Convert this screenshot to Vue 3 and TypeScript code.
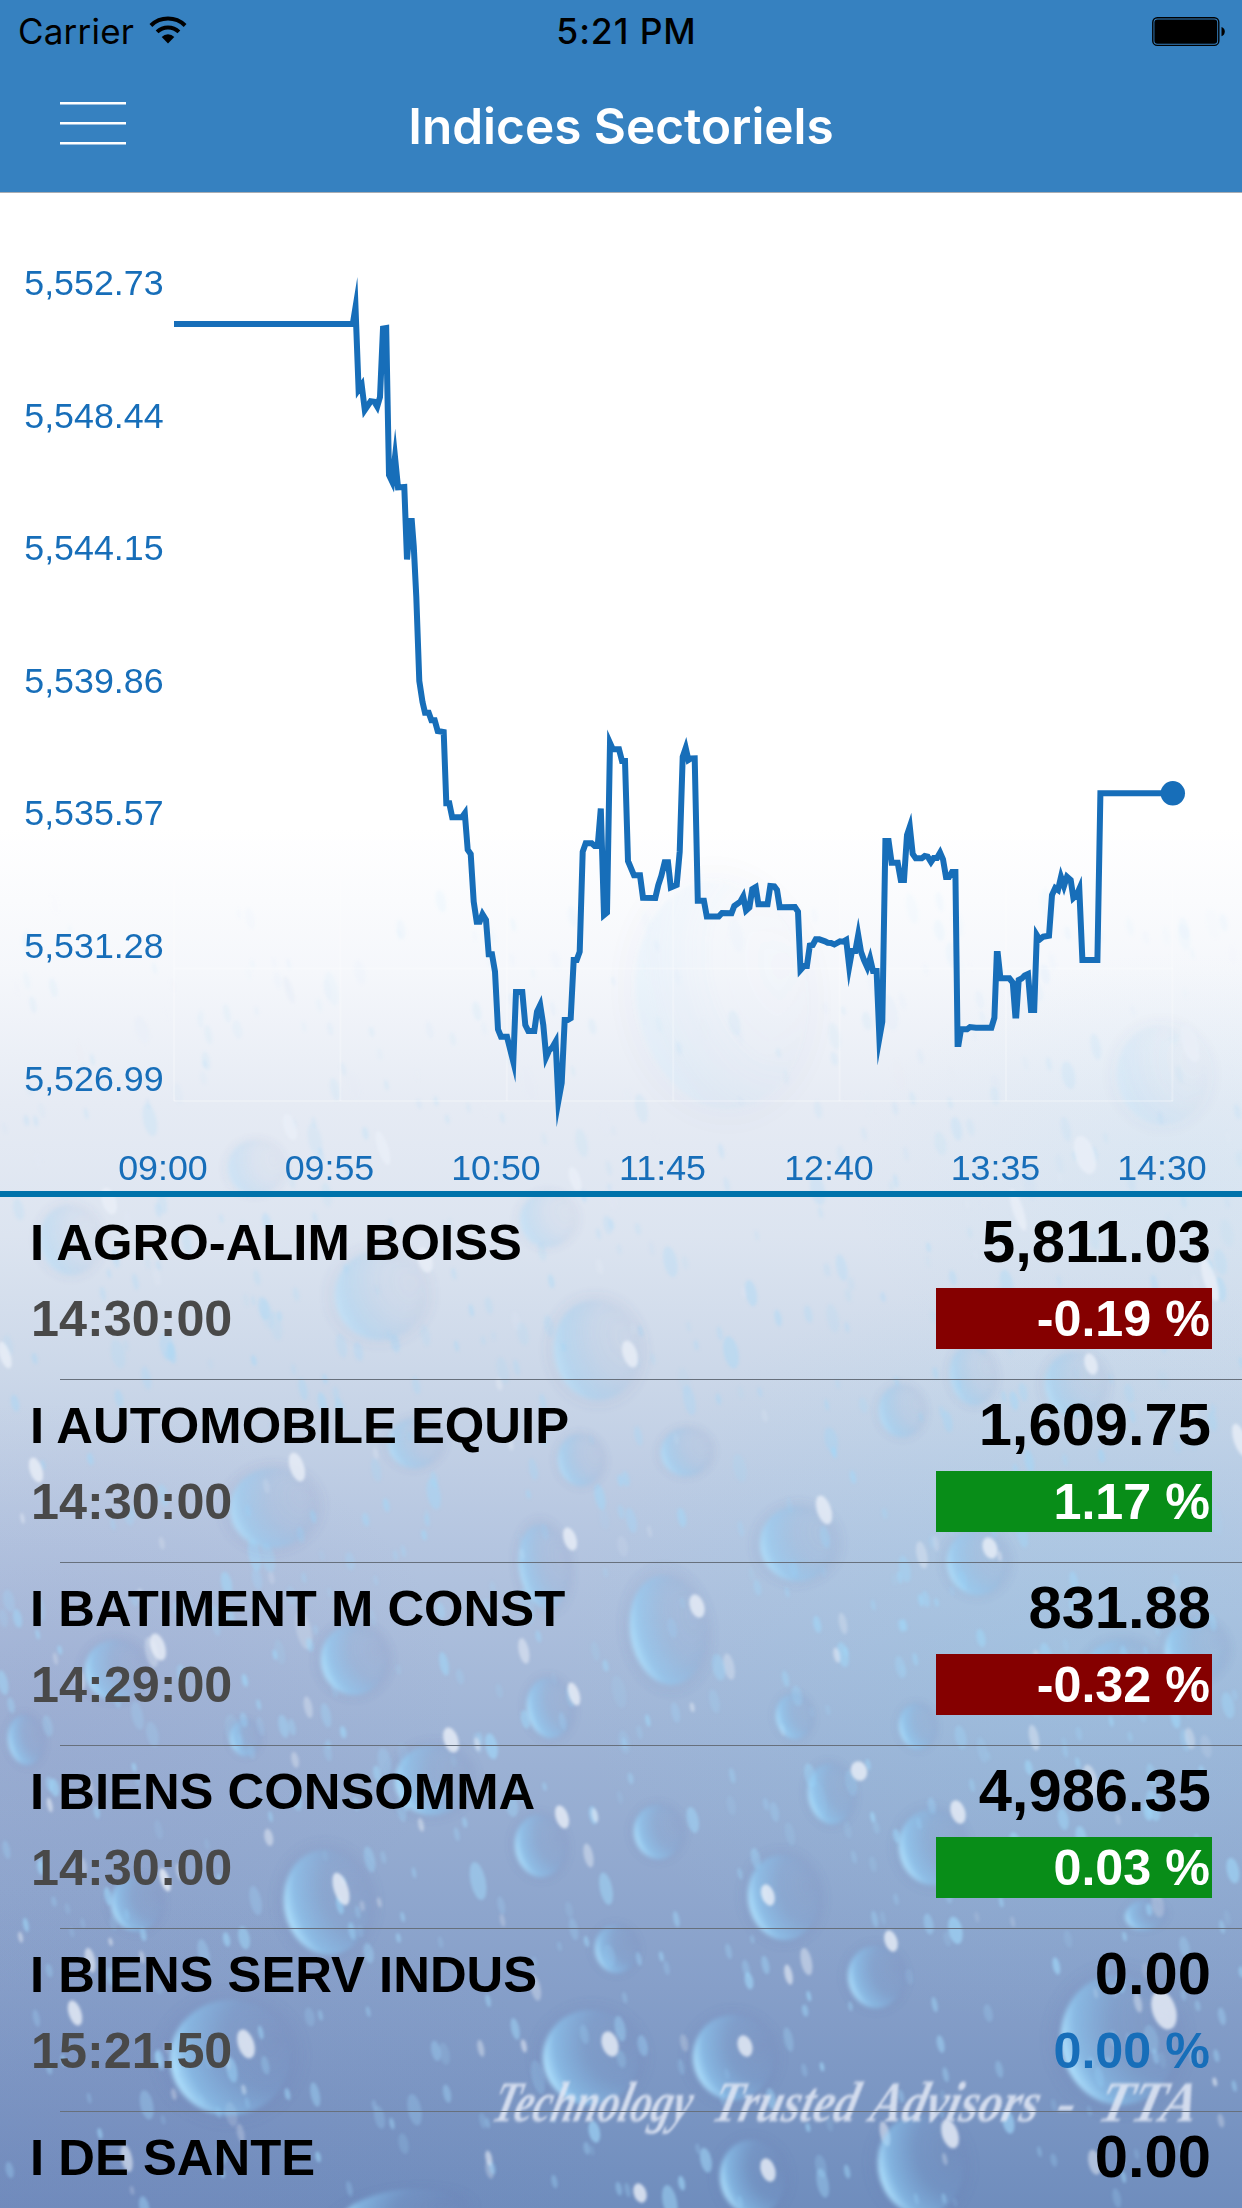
<script setup lang="ts">
interface Quote {
  name: string
  value: string
  time?: string
  change?: string
  trend?: 'up' | 'down' | 'flat'
}

const quotes: Quote[] = [
  { name: 'I AGRO-ALIM BOISS', time: '14:30:00', value: '5,811.03', change: '-0.19 %', trend: 'down' },
  { name: 'I AUTOMOBILE EQUIP', time: '14:30:00', value: '1,609.75', change: '1.17 %', trend: 'up' },
  { name: 'I BATIMENT M CONST', time: '14:29:00', value: '831.88', change: '-0.32 %', trend: 'down' },
  { name: 'I BIENS CONSOMMA', time: '14:30:00', value: '4,986.35', change: '0.03 %', trend: 'up' },
  { name: 'I BIENS SERV INDUS', time: '15:21:50', value: '0.00', change: '0.00 %', trend: 'flat' },
  { name: 'I DE SANTE', value: '0.00' },
]

const levels = ['5,552.73', '5,548.44', '5,544.15', '5,539.86', '5,535.57', '5,531.28', '5,526.99']
const hours = ['09:00', '09:55', '10:50', '11:45', '12:40', '13:35', '14:30']

const series = `174,324 352.8,324 355.5,307.3 358.6,389.5 361.7,385 364.8,410 370.7,401.3 374.3,401.7 377.2,406.5 380,397
383,328.5 386.2,328 389,475 392.2,481.7 395,457 398,487.4 404.3,487 407,559.5 410.2,521 411.8,521 413.8,547 416.3,597
419.3,681 422.5,702 425,712.7 428.7,712.7 431.4,720.3 434.7,720.3 437.7,731 443.7,732 446.3,803.3 449.3,803.3
452.2,817.3 462,817.3 464.8,813.3 467.7,849.7 470.7,854 473.7,901.7 476.7,921.7 479.7,921.7 482.5,914.3 486,920
488.7,954.3 492,954.3 495,971.7 498,1029.3 501,1036.7 507,1036.7 513.3,1061.7 516,992 522.3,992 525.3,1025
528.3,1031 534.3,1031 537,1011.7 540.2,1005 543.3,1025 546.2,1057 549.3,1050 552,1048 555.6,1041.7 558.4,1101
561.7,1083 564.7,1020 567.7,1020 570.7,1018.3 573.7,960 576.7,960 579.7,951.7 582.7,851.7 585.7,843.3 591.7,843.3
594.7,846 597.7,846 600.8,808.5 604,915 607,912.5 610,743 612.8,749.3 619,749.3 622,761 625,761 628,861 634,875.3
640,875.3 643,897.7 655.3,898 658.3,885 661.3,876 664.7,862.3 668,862.3 670.8,887.5 676.7,885 679.7,851.7
682.7,756.7 685.7,748 688.4,760 691,758.4 694.7,758.3 697.8,900.7 703.9,900.7 706.8,916.6 718.7,916.6 722,913
731.5,913.3 734.3,906 740.3,901.7 743.2,896.5 746.1,910.5 749.4,907.5 752.3,889 755.7,887 758.4,904.3 767.5,904.3
770.3,886 774.3,886.3 777,890 779.7,907.3 794.9,907 798,911.7 800.5,970 804,966 806.9,966 809.8,945.6 812.7,945
815.8,939.3 819.3,939.3 825,941.3 827.7,942.7 831,943 834.3,944.5 840,941.3 843.3,941.7 846.2,940 849.2,966.5
852,951 855.3,951 858.2,935 861,951.7 864,960 867.3,967.3 870.1,958.5 873,971 876.6,971 879.4,1038 882.3,1021.7
885.4,841 888.6,841 891.6,862.7 897.7,862.7 900.8,880 904,880 907,835 909.8,826.7 912.7,854 915.7,858.3
921.7,858.3 924.7,856 927.7,856.7 931,862 933.7,858 937,858 940.1,852.7 943,859.3 946,877 949,877 952,872
955.4,872 957.6,1044 958.6,1044 961,1029.3 967,1029.3 970,1027 976,1027.7 991.4,1027.7 994.4,1017.7 996.8,954 997.8,954
1000.4,978 1009.3,978.3 1012.8,982.7 1015.3,1015.5 1016.3,1015.5 1018.7,980 1021.7,978.5 1024.7,975.5 1028,974
1031,1010 1034.2,1010 1036.8,935 1039.6,939.5 1043.3,936.7 1049,935.7 1052,895 1055.2,888 1058,890 1061,877
1064,886 1067,876.7 1070.7,880 1073.4,898 1076.7,895 1079.3,889 1082.4,960 1097.4,960 1100.4,793.3 1172.7,793.3`

type Spot = [x: number, y: number, w: number, h: number]

/* Large drops, placed by hand: left, top, width, height */
const drops: Spot[] = [
  [636, 880, 170, 230], [1117, 1025, 90, 100], [335, 1250, 90, 90], [554, 1300, 85, 100], [228, 1140, 55, 55],
  [40, 1205, 60, 70], [520, 1192, 55, 55], [950, 1345, 45, 60], [1045, 1352, 60, 65], [519, 1524, 50, 85],
  [630, 1575, 75, 110], [321, 1625, 65, 70], [760, 1506, 75, 75], [947, 1530, 60, 65], [527, 1678, 45, 60],
  [284, 1850, 85, 105], [748, 1855, 70, 85], [899, 1810, 65, 75], [634, 1805, 48, 54], [515, 1815, 50, 62],
  [808, 1764, 45, 60], [170, 2000, 120, 115], [543, 2010, 95, 95], [693, 2015, 80, 85], [1061, 1975, 115, 130],
  [848, 1946, 55, 62], [878, 2115, 85, 100], [111, 1876, 50, 55], [776, 1694, 36, 45], [899, 1704, 36, 45],
  [230, 1468, 85, 80], [388, 1418, 54, 50], [558, 1434, 45, 52], [661, 1428, 50, 48], [879, 1385, 45, 52],
  [720, 2140, 65, 75], [395, 1745, 75, 70], [85, 1640, 60, 60], [8, 1715, 35, 50], [340, 2190, 120, 50],
  [1085, 1640, 70, 60], [1165, 1620, 60, 60], [230, 1720, 30, 36], [1125, 1900, 40, 30], [595, 1925, 42, 48],
]

/* Specular highlights: centre x, centre y, radius x, radius y */
const glints: Spot[] = [
  [297, 1467, 8, 15], [158, 1647, 8, 14], [451, 1740, 8, 13], [562, 1817, 7, 12], [341, 1889, 8, 17],
  [246, 2044, 9, 15], [610, 2044, 9, 13], [745, 2046, 8, 11], [1164, 2010, 13, 20], [990, 1548, 8, 11],
  [824, 1510, 8, 15], [697, 1606, 8, 12], [570, 1539, 7, 12], [859, 1771, 9, 10], [958, 1812, 8, 12],
  [768, 1895, 7, 11], [891, 1941, 7, 11], [950, 2134, 9, 15], [768, 2170, 8, 12], [640, 2193, 7, 10],
  [75, 2013, 7, 13], [574, 1694, 6, 12], [109, 1201, 8, 14], [1085, 1155, 11, 20], [1190, 1043, 9, 20],
  [383, 1148, 6, 18], [290, 1127, 7, 14], [575, 1179, 6, 13], [630, 1354, 8, 14], [1091, 1364, 7, 11],
  [1210, 1280, 7, 22], [1018, 1210, 6, 22], [5, 1355, 6, 14], [1240, 1440, 7, 17], [36, 1470, 7, 13],
  [142, 1030, 7, 14], [289, 990, 4, 14], [425, 1260, 8, 13], [1175, 1695, 5, 8], [165, 1880, 5, 12],
]

let state = 7321
const random = (): number => {
  state = (state * 16807) % 2147483647
  return state / 2147483647
}
const sprinkle = Array.from({ length: 900 }, () => {
  const size = 4 + random() * random() * 12
  return {
    x: random() * 1242,
    y: 900 + random() * 1308,
    rx: size * 0.5,
    ry: size * (1 + random() * 0.4),
    glow: 0.15 + random() * 0.5,
  }
})

const strength = (y: number): number => Math.min(1, Math.max(0.14, (y - 850) / 800))
</script>

<template>
  <main class="screen">
    <svg class="wallpaper" viewBox="0 0 1242 2208" aria-hidden="true">
      <defs>
        <linearGradient id="sky" x1="0" y1="0" x2="0" y2="1">
          <stop offset="0.375" stop-color="#ffffff" />
          <stop offset="0.44" stop-color="#f5f7fb" />
          <stop offset="0.5" stop-color="#e6ebf4" />
          <stop offset="0.56" stop-color="#dce4f0" />
          <stop offset="0.62" stop-color="#ccd8e9" />
          <stop offset="0.7" stop-color="#b4c5e0" />
          <stop offset="0.8" stop-color="#9bb1d4" />
          <stop offset="0.9" stop-color="#869fc9" />
          <stop offset="1" stop-color="#6f8dbd" />
        </linearGradient>
        <radialGradient id="violet">
          <stop offset="0" stop-color="#7878b4" stop-opacity="0.13" />
          <stop offset="1" stop-color="#7878b4" stop-opacity="0" />
        </radialGradient>
        <radialGradient id="azure">
          <stop offset="0" stop-color="#8ed0ee" stop-opacity="0.24" />
          <stop offset="1" stop-color="#8ed0ee" stop-opacity="0" />
        </radialGradient>
        <radialGradient id="drop" cx="0.92" cy="0.4" r="0.97">
          <stop offset="0" stop-color="#90c4ea" stop-opacity="0" />
          <stop offset="0.45" stop-color="#84c2ee" stop-opacity="0.12" />
          <stop offset="0.8" stop-color="#90d2fa" stop-opacity="0.55" />
          <stop offset="0.96" stop-color="#b4e4ff" stop-opacity="1" />
        </radialGradient>
        <radialGradient id="shade">
          <stop offset="0.5" stop-color="#6474b0" stop-opacity="0.07" />
          <stop offset="0.75" stop-color="#6474b0" stop-opacity="0.12" />
          <stop offset="1" stop-color="#6474b0" stop-opacity="0" />
        </radialGradient>
        <filter id="soft"><feGaussianBlur stdDeviation="1.8" /></filter>
        <filter id="softer"><feGaussianBlur stdDeviation="2.2" /></filter>
        <filter id="ink"><feGaussianBlur stdDeviation="1.3" /></filter>
      </defs>
      <rect width="1242" height="2208" fill="url(#sky)" />
      <ellipse cx="40" cy="1700" rx="420" ry="300" fill="url(#violet)" />
      <ellipse cx="60" cy="2160" rx="560" ry="280" fill="url(#violet)" />
      <ellipse cx="1080" cy="1650" rx="520" ry="380" fill="url(#azure)" />
      <ellipse cx="1180" cy="1180" rx="330" ry="230" fill="url(#azure)" opacity="0.45" />
      <g filter="url(#soft)">
        <ellipse
          v-for="(s, i) in sprinkle"
          :key="i"
          :cx="s.x"
          :cy="s.y"
          :rx="s.rx"
          :ry="s.ry"
          :fill="i % 7 === 0 ? '#e6ecf6' : '#a0d8fa'"
          :opacity="s.glow * strength(s.y)"
          :transform="`rotate(-12 ${s.x} ${s.y})`"
        />
      </g>
      <g filter="url(#softer)">
        <g
          v-for="(d, i) in drops"
          :key="i"
          :opacity="strength(d[1])"
          :transform="`rotate(-8 ${d[0] + d[2] / 2} ${d[1] + d[3] / 2})`"
        >
          <ellipse :cx="d[0] + d[2] / 2" :cy="d[1] + d[3] / 2" :rx="d[2] * 0.68" :ry="d[3] * 0.64" fill="url(#shade)" />
          <ellipse :cx="d[0] + d[2] / 2" :cy="d[1] + d[3] / 2" :rx="d[2] / 2" :ry="d[3] / 2" fill="url(#drop)" />
        </g>
      </g>
      <g filter="url(#soft)" fill="#eaeff8">
        <ellipse
          v-for="(g, i) in glints"
          :key="i"
          :cx="g[0]"
          :cy="g[1]"
          :rx="g[2] * 0.9"
          :ry="g[3]"
          opacity="0.8"
          :transform="`rotate(-18 ${g[0]} ${g[1]})`"
        />
      </g>
      <g class="watermark" filter="url(#ink)" transform="translate(0 2121) skewX(-14)">
        <text x="490" textLength="198" lengthAdjust="spacingAndGlyphs">Technology</text>
        <text x="710" textLength="144" lengthAdjust="spacingAndGlyphs">Trusted</text>
        <text x="868" textLength="168" lengthAdjust="spacingAndGlyphs">Advisors</text>
        <text x="1054" textLength="18" lengthAdjust="spacingAndGlyphs">-</text>
        <text x="1096" textLength="98" lengthAdjust="spacingAndGlyphs">TTA</text>
      </g>
    </svg>

    <header class="header">
      <div class="status">
        <div class="carrier">
          <span>Carrier</span>
          <svg width="38" height="28" viewBox="0 0 38 28" aria-hidden="true">
            <path d="M1.9 9.5a24.6 24.6 0 0 1 34.2 0M8.1 15.9a15.6 15.6 0 0 1 21.800 0" fill="none" stroke="#000" stroke-width="4" />
            <path d="M19 27.4l-6.3-6.5a8.800 8.800 0 0 1 12.600 0z" />
          </svg>
        </div>
        <span class="clock">5:21 PM</span>
        <svg class="battery" width="74" height="30" viewBox="0 0 74 30" aria-hidden="true">
          <rect x="0.8" y="0.8" width="66" height="27.6" rx="4.5" fill="none" stroke="#000" stroke-width="1.4" />
          <rect x="2.4" y="2.4" width="62.8" height="24.4" rx="3" />
          <path d="M69.5 10c4.4 1.2 4.4 8 0 9.200z" />
        </svg>
      </div>
      <div class="nav">
        <div class="menu"><i></i><i></i><i></i></div>
        <h1>Indices Sectoriels</h1>
      </div>
    </header>

    <svg class="chart" width="1242" height="998" viewBox="0 193 1242 998">
      <g stroke="#fff" stroke-opacity="0.24" stroke-width="2">
        <line v-for="n in 7" :key="n" :x1="7.6 + n * 166.4" :x2="7.6 + n * 166.4" y1="300" y2="1101" />
        <line v-for="n in 7" :key="`h${n}`" x1="174" x2="1173" :y1="172.8 + n * 132.6" :y2="172.8 + n * 132.6" />
      </g>
      <polyline :points="series" fill="none" stroke="#176eb9" stroke-width="6" stroke-miterlimit="10.6" />
      <circle cx="1172.8" cy="793.3" r="12.2" fill="#176eb9" />
      <g class="label" text-anchor="end">
        <text v-for="(level, i) in levels" :key="level" x="163.6" :y="295 + i * 132.6">{{ level }}</text>
      </g>
      <g class="label" text-anchor="middle">
        <text v-for="(hour, i) in hours" :key="hour" :x="163 + i * 166.5" y="1180">{{ hour }}</text>
      </g>
    </svg>

    <section class="quotes">
      <article v-for="quote in quotes" :key="quote.name" class="quote">
        <div class="line top">
          <span class="name">{{ quote.name }}</span>
          <span class="value">{{ quote.value }}</span>
        </div>
        <div v-if="quote.time" class="line">
          <span class="time">{{ quote.time }}</span>
          <span class="change" :class="quote.trend">{{ quote.change }}</span>
        </div>
      </article>
    </section>
  </main>
</template>

<style>
body {
  margin: 0;
  background: #fff;
}
</style>

<style scoped>
.screen {
  position: relative;
  width: 1242px;
  height: 2208px;
  overflow: hidden;
  font-family: 'Liberation Sans', Arial, sans-serif;
}
.wallpaper {
  position: absolute;
  inset: 0;
  width: 1242px;
  height: 2208px;
}
.watermark text {
  font: italic 700 58px 'Liberation Serif', cursive;
  fill: #e2e8f4;
  fill-opacity: 0.85;
}
.header {
  position: relative;
  box-sizing: border-box;
  height: 193px;
  background: #3681c0;
  border-bottom: 1px solid #a9adb3;
  font-family: Inter, sans-serif;
}
.status {
  display: grid;
  grid-template-columns: 1fr auto 1fr;
  align-items: center;
  box-sizing: border-box;
  height: 62px;
  padding: 1px 16px 0 18px;
  color: #000;
  font-size: 35px;
}
.carrier {
  display: flex;
  align-items: center;
  gap: 15px;
  letter-spacing: 0.2px;
}
.carrier span {
  margin-bottom: 2px;
}
.carrier svg {
  margin-bottom: 3px;
}
.clock {
  font-weight: 500;
  font-size: 35.5px;
  letter-spacing: 0.9px;
  margin-left: 9px;
}
.battery {
  justify-self: end;
}
.nav {
  display: flex;
  align-items: center;
  justify-content: center;
  position: relative;
  height: 130px;
}
.menu {
  position: absolute;
  left: 60px;
  top: 40px;
  display: flex;
  flex-direction: column;
  gap: 17px;
  width: 66px;
}
.menu i {
  height: 3px;
  background: linear-gradient(#fff 70%, #9dc0e0 70%);
}
h1 {
  margin: 0;
  color: #fff;
  font-size: 49.5px;
  font-weight: 600;
  line-height: 128px;
  padding-bottom: 2px;
}
.chart {
  position: relative;
  display: block;
}
.label {
  font-size: 35.8px;
  fill: #176eb9;
}
.quotes {
  position: relative;
  border-top: 6px solid #0072aa;
}
.quote {
  position: relative;
  box-sizing: border-box;
  height: 183px;
  padding: 15px 30px 0;
  font-weight: 700;
}
.quote::after {
  content: '';
  position: absolute;
  left: 60px;
  right: 0;
  bottom: 0;
  height: 1px;
  background: #67707c;
}
.line {
  display: flex;
  justify-content: space-between;
  line-height: 61px;
  white-space: nowrap;
}
.top {
  height: 76px;
  line-height: 60px;
}
.name {
  font-size: 50.8px;
  line-height: 62px;
}
.value {
  font-size: 59.7px;
  margin-right: 1px;
}
.time,
.change {
  font-size: 50.3px;
}
.time {
  color: #494949;
  margin-left: 1px;
}
.change {
  box-sizing: border-box;
  width: 276px;
  height: 61px;
  padding-right: 2px;
  text-align: right;
  color: #fff;
}
.down {
  background: #850000;
}
.up {
  background: #088d18;
}
.flat {
  color: #176eb9;
}
</style>
